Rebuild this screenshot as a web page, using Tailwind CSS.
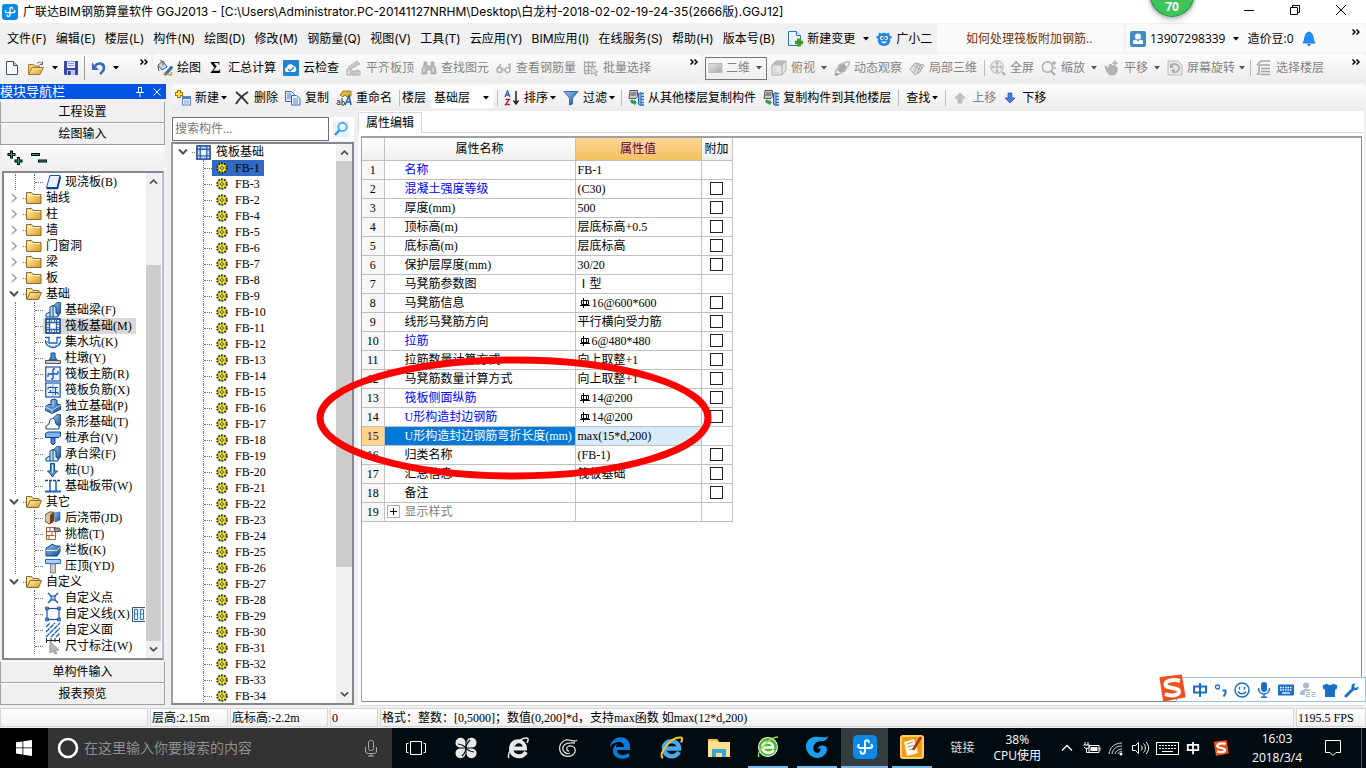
<!DOCTYPE html>
<html lang="zh-CN">
<head>
<meta charset="utf-8">
<title>广联达BIM钢筋算量软件 GGJ2013</title>
<script src="https://cdn.jsdelivr.net/npm/@tailwindcss/browser@4"></script>
</head>
<body class="h-screen overflow-hidden flex flex-col bg-[#f0f0f0] text-black text-[12px] leading-4 font-['Open_Sans','Noto_Sans_CJK_SC',sans-serif]">

<svg class="absolute size-0" aria-hidden="true">
  <defs>
    <linearGradient id="gFold" x1="0" y1="0" x2="1" y2="1"><stop offset="0" stop-color="#fff3b8"/><stop offset="1" stop-color="#d99a22"/></linearGradient>
    <linearGradient id="gBlue" x1="0" y1="0" x2="1" y2="1"><stop offset="0" stop-color="#9cc8f0"/><stop offset="1" stop-color="#0f4f96"/></linearGradient>
    <linearGradient id="gGrey" x1="0" y1="0" x2="1" y2="1"><stop offset="0" stop-color="#e6e6e6"/><stop offset="1" stop-color="#a8a8a8"/></linearGradient>
  </defs>
  <symbol id="app" viewBox="0 0 16 16"><rect width="16" height="16" rx="3" fill="#0a8ae6"/><path d="M8 11V4.800c0-1.800 2.600-1.800 2.600 0M3.800 6.500C2.800 8 3.600 8.600 5 8.600h6.500c1.400 0 1.700-1.600.8-2.100M8 10.500c0 2.600-3 2.600-3 .4" fill="none" stroke="#fff" stroke-width="1.300" stroke-linecap="round"/></symbol>
  <symbol id="arr" viewBox="0 0 6 4"><path d="M0 0h6L3 3.500z" fill="currentColor"/></symbol>
  <symbol id="more" viewBox="0 0 8 6"><path d="M.5.500 3 3 .5 5.500M4.500.500 7 3 4.500 5.500" fill="none" stroke="#000" stroke-width="1.500"/></symbol>
  <symbol id="doc" viewBox="0 0 16 16"><path d="M2.500 1.500h7l4 4v9h-11z" fill="#fff" stroke="#36517c"/><path d="M9.500 1.500v4h4" fill="#bcd2ee" stroke="#36517c"/></symbol>
  <symbol id="openf" viewBox="0 0 16 16"><path d="M.5 14V4.500h5l1 1.500h5v2" fill="#f3cf73" stroke="#a57a2a"/><path d="M.5 14.500 4 7.500h11.500L12 14.500z" fill="url(#gFold)" stroke="#a57a2a"/><path d="M9 3.500c2-2 4-1.500 5 .5M14.500 1.500v3h-3" fill="none" stroke="#4a6a8a"/></symbol>
  <symbol id="save" viewBox="0 0 16 16"><path d="M1 1h14v14H2l-1-1z" fill="#3a46a8"/><rect x="4" y="1.500" width="8" height="6.500" fill="#e6ecfa"/><path d="M5 3.500h6M5 5.500h6" stroke="#8a9ac8"/><rect x="4" y="10" width="8" height="5" fill="#b8c4e8"/><rect x="5" y="11" width="2.500" height="4" fill="#2a3480"/></symbol>
  <symbol id="undo" viewBox="0 0 16 16"><path d="M4 6c3-4 9-3 9 2 0 3-2 4-4 6" fill="none" stroke="#3a66c4" stroke-width="2.600"/><path d="M1 2.500V10h7z" fill="#3a66c4"/></symbol>
  <symbol id="paint" viewBox="0 0 16 16"><path d="M1 5 6 1l4 6-5 3z" fill="#c9d4e0" stroke="#4d6076"/><path d="M3 1c2-1 3 0 3 4M1 6l1 5" fill="none" stroke="#3b5068"/><path d="m7 14 7-8 2 1.500-7 8z" fill="#2f7ac4" stroke="#204a80" stroke-width=".6"/><path d="m5 15 2-3 2 1.500z" fill="#f0b82a"/><path d="m10 14 4 1 1-3" fill="none" stroke="#e0a020" stroke-width="1.500"/></symbol>
  <symbol id="cloud" viewBox="0 0 16 16"><rect width="16" height="16" rx="1" fill="#1b86cf"/><path d="M4 12c-3-.5-3-4 0-4.500C4 4 9 3 10.500 6c3 0 4 5 1 6z" fill="#fff"/><path d="m5 9 2 2 4-4" fill="none" stroke="#1b86cf" stroke-width="1.500"/></symbol>
  <symbol id="align" viewBox="0 0 16 16"><path d="m2 7 9-6 3 3-9 5z" fill="url(#gGrey)" stroke="#aaa" stroke-width=".7"/><path d="M1 15V9h4v6zM6 15v-4h8v4zM8 11v4M11 9v6" fill="#ddd" stroke="#aaa"/></symbol>
  <symbol id="bino" viewBox="0 0 16 16"><path d="M3 2h3v3l1 1h2l1-1V2h3v3l2 4v5h-5v-4H6v4H1V9l2-4z" fill="#b8b8b8" stroke="#999" stroke-width=".6"/><path d="M3 8v4M12 8v4" stroke="#eee"/></symbol>
  <symbol id="glass" viewBox="0 0 16 16"><path d="M1 10a2.500 2.500 0 1 0 5 0 2.500 2.500 0 1 0-5 0zm8 0a2.500 2.500 0 1 0 5 0 2.500 2.500 0 1 0-5 0zM6 9.500h3M1 9l4-5M14 9V4l-2 1" fill="none" stroke="#b0b0b0" stroke-width="1.500"/></symbol>
  <symbol id="gridsel" viewBox="0 0 16 16"><path d="M1.500 1v13M5.500 1v13M9.500 1v6M1 2.500h12M1 6.500h12M1 10.500h6M1 13.500h6" fill="none" stroke="#aaa" stroke-width="1.300"/><path d="m8 6 7 6-3 .3 2 3-1.500.5-1.500-3-2.500 2z" fill="#ddd" stroke="#999" stroke-width=".7"/></symbol>
  <symbol id="flat" viewBox="0 0 16 16"><rect x="1" y="3.500" width="13" height="9" fill="url(#gGrey)" stroke="#bbb"/></symbol>
  <symbol id="cube" viewBox="0 0 16 16"><path d="M1 5 5 1h10v9l-4 5H1z" fill="#e6e6e6" stroke="#aaa"/><path d="M1 5h10v10M11 5l4-4" fill="none" stroke="#aaa"/><path d="M1 5 5 1h10l-4 4z" fill="#bbb"/><path d="M4 8v5h5" fill="none" stroke="#ccc"/></symbol>
  <symbol id="orbit" viewBox="0 0 16 16"><circle cx="8" cy="8" r="4.500" fill="#aaa"/><path d="M2 14c-3-3 9-14 13-12 2 2-8 14-13 12z" fill="none" stroke="#b8b8b8" stroke-width="1.500"/><path d="m1 15 3-1" stroke="#999" stroke-width="2"/></symbol>
  <symbol id="part3" viewBox="0 0 16 16"><path d="m1 9 5-6 9 2-4 7-5 3z" fill="#e0e0e0" stroke="#a8a8a8"/><path d="m4 5 8 5M9 3.500 5 13M7 3l7 5M12 4 8 14" fill="none" stroke="#a8a8a8"/></symbol>
  <symbol id="full" viewBox="0 0 16 16"><circle cx="7" cy="7" r="6.200" fill="#eee" stroke="#aaa"/><path d="M7 2v10M2 7h10M5.500 4 7 2.200 8.500 4M5.500 10 7 11.800 8.500 10M4 5.500 2.200 7 4 8.500M10 5.500 11.800 7 10 8.500" fill="none" stroke="#aaa"/><path d="m12 12 3 3" stroke="#aaa" stroke-width="2"/></symbol>
  <symbol id="zoomi" viewBox="0 0 16 16"><circle cx="6.500" cy="7" r="5.200" fill="#f2f2f2" stroke="#aaa" stroke-width="1.400"/><path d="m10 11 4 4" stroke="#aaa" stroke-width="2.200"/><path d="M13 1v4M11 3h4M12 8h3" stroke="#999"/></symbol>
  <symbol id="hand" viewBox="0 0 16 16"><path d="M1 6c2 0 3 2 4 3V5l2-1 1 2 2-.5 1 1 2 .5v4c0 2-2 4-4 4H6c-3-2-4-5-5-9z" fill="#b4b4b4" stroke="#999" stroke-width=".6"/><path d="M11 0v6M8 3h6" stroke="#999"/></symbol>
  <symbol id="rot" viewBox="0 0 16 16"><path d="M1 1h10l4 4v10H1z" fill="#e9e9e9" stroke="#bbb"/><path d="M4 6c3-4 9-1 8 3-1 3-4 4-6 3" fill="none" stroke="#aaa" stroke-width="1.800"/><path d="M3 3v5h4zM4 10l4-1-1 5z" fill="#aaa"/></symbol>
  <symbol id="floors" viewBox="0 0 16 16"><path d="M1 5 5 1h9M3 5h11M5 8.500h9M5 11.500h9M5 14.500h9M3 5v9M1 14h3" fill="none" stroke="#a5a5a5" stroke-width="1.500"/></symbol>
  <symbol id="newc" viewBox="0 0 16 16"><path d="M4 0v8M0 4h8" stroke="#a07808" stroke-width="4"/><path d="M4 1v6M1 4h6" stroke="#ffe04a" stroke-width="2"/><rect x="7.500" y="6.500" width="8" height="8.500" fill="#eef4fd" stroke="#5a84c4"/><path d="M7 8h9" stroke="#4a7cd0" stroke-width="2"/><path d="M9 11h5M9 13h5" stroke="#7a9cd0"/></symbol>
  <symbol id="delx" viewBox="0 0 16 16"><path d="M2 2c4 3 8 7 12 12M14 2C9 5 5 9 2 14" fill="none" stroke="#333" stroke-width="1.900"/></symbol>
  <symbol id="copy" viewBox="0 0 16 16"><path d="M.5 1.500h6l3 3v7h-9z" fill="#dbe8fa" stroke="#3c6ab4"/><path d="M6.500 5.500h5l3.500 3v6.500H6.500z" fill="#eaf2ff" stroke="#3c6ab4"/><path d="M2 4h4M2 6h4M2 8h4M8 9h5M8 11h5M8 13h5" stroke="#5a88d0"/></symbol>
  <symbol id="ren" viewBox="0 0 16 16"><path d="m4 5 3-4h8v5l-4 1-2-2-2 2z" fill="#e2b83c" stroke="#8a6a1a" stroke-width=".8"/><path d="M1 11c3-2 3 0 3 4M4 12c-5 0-3 4 0 2M6 8v7c4 1 3-5 0-3" fill="none" stroke="#333"/><path d="m9 15 4-9 2 9M10 12h5" fill="none" stroke="#2a5cc0" stroke-width="1.500"/></symbol>
  <symbol id="sort" viewBox="0 0 16 16"><path d="m1 7 2.500-6L6 7M2 5h3" fill="none" stroke="#3a56b0" stroke-width="1.300"/><path d="M1.500 9.500h4l-4 5h4.500" fill="none" stroke="#a03040" stroke-width="1.300"/><path d="M12 1v12M9.500 10.500 12 14l2.500-3.500" fill="none" stroke="#222" stroke-width="1.500"/></symbol>
  <symbol id="filt" viewBox="0 0 16 16"><path d="M1 1.500h14L9.500 8v6l-3 1V8z" fill="url(#gBlue)" stroke="#3468b8"/></symbol>
  <symbol id="fromf" viewBox="0 0 16 16"><path d="M2 .5h7.500v6l-1.500 2H1z" fill="#ccc" stroke="#555"/><path d="M3 3h5.500M2.500 5H8" stroke="#444"/><path d="M10.500 3.500 13 2.500v13l-2.500-1z" fill="#8cb8e8" stroke="#2c6cb4"/><path d="M13 3.500h3M13 6.500h3M13 9.500h3M13 12.500h3M13 15h3" stroke="#2c6cb4" stroke-width="1.400"/><path d="M2 11c2-2 3-1 4 0V9.500l3 3-3 3V14c-2 0-3-1-4-3z" fill="#28a050"/></symbol>
  <symbol id="up" viewBox="0 0 12 12"><path d="M6 1 1 6h3v5h4V6h3z" fill="#c4c4c4" stroke="#aaa" stroke-width=".7"/></symbol>
  <symbol id="down" viewBox="0 0 12 12"><path d="M6 11 1 6h3V1h4v5h3z" fill="#4a7ae0" stroke="#2a4ca8" stroke-width=".7"/></symbol>
  <symbol id="chg" viewBox="0 0 16 16"><path d="M1.500.500h8l4 4v10h-12z" fill="#eaf4ff" stroke="#2f74b4"/><path d="M9.500.500v4h4" fill="#fff" stroke="#2f74b4"/><path d="M12 7.500v8M8 11.500h8" stroke="#3a9a20" stroke-width="3.600"/></symbol>
  <symbol id="mascot" viewBox="0 0 16 16"><path d="m3 1.500 2 1c2-1 4-1 6 0l2-1 .5 3c1 1 2 1 2.500.5 0 2-1 2.500-2 3 1 4-2 7-6 7s-7-3-6-7c-1-.5-2-1-2-3 .5.500 1.500.500 2.500-.5z" fill="#1f8ae0"/><ellipse cx="5.800" cy="7" rx="1.800" ry="2" fill="#fff"/><ellipse cx="10.200" cy="7" rx="1.800" ry="2" fill="#fff"/><circle cx="6.200" cy="7.200" r=".9" fill="#124a84"/><circle cx="9.800" cy="7.200" r=".9" fill="#124a84"/><path d="M5 10.500c1.500 2.500 4.500 2.500 6 0z" fill="#fff"/></symbol>
  <symbol id="user" viewBox="0 0 16 16"><rect width="16" height="16" rx="2" fill="#3d8ec4"/><circle cx="8" cy="5.500" r="3" fill="#fff"/><path d="M3 13V9.500l3-1 2 2 2-2 3 1V13z" fill="#fff"/></symbol>
  <symbol id="bell" viewBox="0 0 14 16"><path d="M7 1c5 1 3.500 8 6 11H1C3.500 9 2 2 7 1z" fill="#1e90ff" stroke="#1874dc"/><path d="M5 13h4l-2 2.500z" fill="#1667c4"/></symbol>
  <symbol id="fold" viewBox="0 0 16 14"><path d="M.5 12.500v-11h5l1.500 2h8v9z" fill="url(#gFold)" stroke="#8d6a26"/><path d="M1 4.500h13" stroke="#fff4cc"/></symbol>
  <symbol id="foldo" viewBox="0 0 16 14"><path d="M.5 12V1.500h5l1.500 2h6V6" fill="#f7e29a" stroke="#8d6a26"/><path d="m1 12.500 3-7h11.500l-3 7z" fill="url(#gFold)" stroke="#8d6a26"/></symbol>
  <symbol id="slab" viewBox="0 0 16 16"><path d="M5 1.500h10l-3 12H1.500z" fill="#e8f2ff" stroke="#1c50a8"/><path d="M1.500 14.500h11l3-12" fill="none" stroke="#0f3f8a" stroke-width="1.600"/></symbol>
  <symbol id="beam" viewBox="0 0 16 16"><path d="m8 4 4-3.500h3.500V11L13 14z" fill="url(#gBlue)" stroke="#12427c" stroke-width=".8"/><path d="M1 15v-3l4-2V5l3-1.500 3 1.500v6l2 1v3z" fill="#cfe4f8" stroke="#0f4688"/><path d="M5 10v5M8 4v11" stroke="#0f4688"/></symbol>
  <symbol id="raft" viewBox="0 0 16 16"><rect x="1" y="1" width="14" height="14" fill="#fff" stroke="#123f8a" stroke-width="1.600"/><path d="M4.500 1v14M11.500 1v14M1 4.500h14M1 11.500h14" stroke="#2a5cac" stroke-width="1.400"/><path d="M6.500 2v2M9.500 2v2M6.500 12v2M9.500 12v2M2 6.500h2M2 9.500h2M12 6.500h2M12 9.500h2" stroke="#5a86cc"/></symbol>
  <symbol id="pit" viewBox="0 0 16 16"><path d="M0 3.500h4V9h8V3.500h4M0 6c1 10 15 10 16 0" fill="none" stroke="#1c60b4" stroke-width="1.300"/><path d="M2 7v2m3 2v2m3-1v2m3-3v2m3-4v2" stroke="#1c60b4"/></symbol>
  <symbol id="pier" viewBox="0 0 16 16"><path d="m4 10 2-3V3h4v4l2 3z" fill="#4d8bd4" stroke="#16458a"/><path d="M.5 10.500h15v3H.5z" fill="#ccc" stroke="#555"/></symbol>
  <symbol id="main" viewBox="0 0 16 16"><rect x=".7" y="1" width="14.500" height="14" fill="#e9f2ff" stroke="#1c54b4" stroke-width="1.200"/><path d="M8 3v10M3 8h10M10 3H8M3 11V8M13 8V5M6 13h2" fill="none" stroke="#1c54b4" stroke-width="1.300"/></symbol>
  <symbol id="neg" viewBox="0 0 16 16"><rect x=".7" y="1" width="14.500" height="14" fill="#e9f2ff" stroke="#1c54b4" stroke-width="1.200"/><path d="M8 1v14" stroke="#7d9ccc"/><path d="M3 5.500h10M3 10.500h10M5.500 5.500v-1M10.500 5.500V13M5.500 10.500V8M3 5.500v2M13 10.500v2" fill="none" stroke="#1c54b4" stroke-width="1.200"/></symbol>
  <symbol id="indep" viewBox="0 0 16 16"><path d="m0 9 4-3 2 1V2l4-1 2 1.500V6l4 1v4L7 15.500 0 12z" fill="url(#gBlue)" stroke="#0e3d78"/><path d="m0 9 7 3 9-5M7 12v3M8 3v6" fill="none" stroke="#e6f2ff" stroke-width=".8"/></symbol>
  <symbol id="strip" viewBox="0 0 16 16"><path d="m8 4 4-3.500h3.500V11L13 14z" fill="url(#gBlue)" stroke="#12427c" stroke-width=".8"/><path d="M1 15v-3l3-2 1-4c2-2 4-2 5 0l1 4 3 2v3z" fill="#fff" stroke="#0f4688"/></symbol>
  <symbol id="cap" viewBox="0 0 16 16"><path d="M.5 3.500 3 2h12.500v4L14 7.500H.5z" fill="#7cb4ec" stroke="#16458a"/><path d="M6 8v5l2 2 2-2V8z" fill="#4d8bd4" stroke="#16458a"/></symbol>
  <symbol id="pile" viewBox="0 0 16 16"><path d="M5.500 1.500h4V9h3l-3 3-2 3-2-3-3-3h3z" fill="#5a94d8" stroke="#16458a"/><path d="M7.500 3v8" stroke="#cfe4ff"/></symbol>
  <symbol id="band" viewBox="0 0 16 16"><path d="M0 2.500h16" stroke="#16458a" stroke-width="1.500" stroke-dasharray="3 1"/><path d="M5 3v10M11 3v10" stroke="#1c60c4" stroke-width="1.500"/><path d="M0 13.500h16" stroke="#1c60c4" stroke-width="2"/></symbol>
  <symbol id="post" viewBox="0 0 16 16"><path d="m0 5 4-3h4v10l-4 2-4-3z" fill="#d8c0a0" stroke="#555"/><path d="m5 5 4-3v9l-4 3z" fill="#7a3c14"/><path d="m9 3 6-1v8l-5 2z" fill="url(#gBlue)" stroke="#26588c" stroke-width=".6"/></symbol>
  <symbol id="eave" viewBox="0 0 16 16"><path d="M1.500 1.500h9v12h-9z" fill="#fff" stroke="#b45a30"/><path d="M1.500 5.500h8M1.500 9.500h8M5 2v3M7 6v3M4 10v3" stroke="#b45a30"/><path d="M9 2h5l2 3-6 1z" fill="#999" stroke="#444"/></symbol>
  <symbol id="rail" viewBox="0 0 16 16"><path d="m1 6 4-2 2-2 4 2h4v6l-3 4H1z" fill="url(#gBlue)" stroke="#16458a"/><path d="M1 8.500h11l3-3.500" fill="none" stroke="#e0f0ff"/></symbol>
  <symbol id="coping" viewBox="0 0 16 16"><path d="M.5 1.500h15v4H.5z" fill="#a8d0ff" stroke="#1c6cd4"/><path d="M5.500 6h5v9h-5z" fill="#ccc" stroke="#888"/></symbol>
  <symbol id="cpt" viewBox="0 0 16 16"><path d="m3 3 10 10M13 3 3 13" stroke="#1c50b0" stroke-width="1.400"/><rect x="6" y="6" width="4" height="4" fill="#9cc8ff" stroke="#1c50b0"/></symbol>
  <symbol id="cline" viewBox="0 0 16 16"><rect x="2" y="2.500" width="12" height="11" fill="#fff" stroke="#1c50b0" stroke-width="1.200"/><path d="M.5 1h3v3h-3zm12 0h3v3h-3zm0 11h3v3h-3zm-12 0h3v3h-3z" fill="#4a86e0" stroke="#123f8a" stroke-width=".6"/></symbol>
  <symbol id="cface" viewBox="0 0 16 16"><path d="M1 5l4-4M1 10l9-9M1 15 15 1M6 15l9-9M11 15l4-4" stroke="#1c60c4" stroke-width="1.300" stroke-dasharray="5 .6"/></symbol>
  <symbol id="dim" viewBox="0 0 16 16"><path d="M1.500 0v5M14.500 0v5M1 2.500h14M6 0v4M10 0v4" stroke="#222"/><path d="m5 4 9 8-4 .5 2 3-2 .5-2-3-3 2z" fill="#bbb" stroke="#777" stroke-width=".7"/></symbol>
  <symbol id="gear" viewBox="0 0 12 12"><circle cx="6" cy="6" r="4.800" fill="#f8f020" stroke="#2a2800" stroke-width="1.800" stroke-dasharray="1.900 1.100"/><path d="M6 2v8M2 6h8" stroke="#807a00" stroke-width=".8"/><circle cx="6" cy="6" r="1.400" fill="#fff" stroke="#333" stroke-width=".8"/></symbol>
  <symbol id="cu" viewBox="0 0 10 8"><path d="M1 6.500 5 2.500 9 6.500" fill="none" stroke="#505050" stroke-width="2"/></symbol>
  <symbol id="cd" viewBox="0 0 10 8"><path d="M1 1.500 5 5.500 9 1.500" fill="none" stroke="#505050" stroke-width="2"/></symbol>
  <symbol id="cr" viewBox="0 0 8 10"><path d="M2 1 6 5 2 9" fill="none" stroke="#a0a0a0" stroke-width="1.500"/></symbol>
  <symbol id="mag" viewBox="0 0 16 16"><circle cx="9.500" cy="6" r="4.200" fill="#eaf6ff" stroke="#4aa4e8" stroke-width="1.800"/><path d="M6.500 9 2 14" stroke="#3a90d8" stroke-width="2.400"/></symbol>
  <symbol id="phi" viewBox="0 0 10 10"><path d="M3.500 0v10M6.500 2v5M1.500 2.500h7v4h-7zM0 7.500h10" fill="none" stroke="#000"/></symbol>
  <symbol id="sogou" viewBox="0 0 28 28"><path d="M2.500 4 23 1.500 26.500 22.500 6 26.500z" fill="#f0501e" stroke="#f0501e" stroke-width="2" stroke-linejoin="round"/><path d="M22 7C15 5 7.500 6.500 7.500 10.500c0 4.500 13.500 2.500 13.500 7 0 4-8 5-14 2.500" fill="none" stroke="#fff" stroke-width="4"/></symbol>
  <symbol id="zh" viewBox="0 0 16 16"><path d="M2 4.500h12v6H2zM8 1v14" fill="none" stroke="currentColor" stroke-width="2"/></symbol>
</svg>

<!-- title bar -->
<header class="relative h-[23px] shrink-0 bg-white flex items-center pl-[2px]">
  <svg class="size-4"><use href="#app"/></svg>
  <h1 class="ml-[5px] flex-1 whitespace-nowrap font-['Inter','Noto_Sans_CJK_SC',sans-serif]">广联达BIM钢筋算量软件 GGJ2013 - [C:\Users\Administrator.PC-20141127NRHM\Desktop\白龙村-2018-02-02-19-24-35(2666版).GGJ12]</h1>
  <div class="flex items-center gap-[34px] pr-[19px] pb-[3px]">
    <button aria-label="最小化"><svg class="size-3" viewBox="0 0 12 12"><path d="M1 6.500h10" stroke="#000"/></svg></button>
    <button aria-label="还原"><svg class="size-3" viewBox="0 0 12 12"><path d="M1.500 3.500h7v7h-7zM3.500 3V1.500h7v7H9" fill="none" stroke="#000"/></svg></button>
    <button aria-label="关闭"><svg class="size-3" viewBox="0 0 12 12"><path d="m1 1 10 10M11 1 1 11" stroke="#000"/></svg></button>
  </div>
  <div class="absolute right-[170px] top-[-29px] size-12 rounded-full border-2 border-[#c9c9c9] bg-[#3cc35a] ring-1 ring-inset ring-[#1f8f3c] shadow-md text-white font-bold leading-3 flex items-end justify-center pb-1">70</div>
</header>

<!-- menu bar -->
<nav class="h-[31px] shrink-0 flex items-center whitespace-nowrap" aria-label="菜单">
  <div class="flex items-center gap-[9px] pl-[7px] font-['Inter','Noto_Sans_CJK_SC',sans-serif]">
    <button>文件(F)</button><button>编辑(E)</button><button>楼层(L)</button><button>构件(N)</button><button>绘图(D)</button><button>修改(M)</button><button>钢筋量(Q)</button><button>视图(V)</button><button>工具(T)</button><button>云应用(Y)</button><button>BIM应用(I)</button><button>在线服务(S)</button><button>帮助(H)</button><button>版本号(B)</button>
  </div>
  <button class="ml-3 flex items-center gap-1"><svg class="size-4"><use href="#chg"/></svg>新建变更<svg class="ml-1 w-[6px] h-1"><use href="#arr"/></svg></button>
  <button class="ml-[7px] flex items-center gap-1"><svg class="size-4"><use href="#mascot"/></svg>广小二</button>
  <div class="ml-auto w-[187px] h-[29px] rounded bg-[#fafafa] flex items-center pl-[29px] text-[#6b3410]"><a href="#">如何处理筏板附加钢筋..</a></div>
  <div class="ml-[2px] w-[240px] h-[29px] rounded bg-[#fafafa] flex items-center pl-1">
    <button class="flex items-center gap-1"><svg class="size-4"><use href="#user"/></svg>13907298339<svg class="ml-1 w-[6px] h-1"><use href="#arr"/></svg></button>
    <span class="ml-2">造价豆:0</span>
    <button class="ml-2" aria-label="通知"><svg class="w-[14px] h-4"><use href="#bell"/></svg></button>
    <button class="ml-auto mr-[6px] self-start mt-[5px]" aria-label="更多"><svg class="w-2 h-[6px]"><use href="#more"/></svg></button>
  </div>
</nav>

<!-- drawing toolbar -->
<div class="h-7 shrink-0 flex whitespace-nowrap text-[#838383]">
  <div class="w-[151px] mr-[2px] rounded bg-linear-to-b from-[#fcfcfc] to-[#ececec] flex items-center pl-[4px] text-black">
    <button aria-label="新建"><svg class="size-4"><use href="#doc"/></svg></button>
    <button class="ml-2 flex items-center gap-2" aria-label="打开"><svg class="size-4"><use href="#openf"/></svg><svg class="w-[6px] h-1"><use href="#arr"/></svg></button>
    <button class="ml-[5px]" aria-label="保存"><svg class="size-4"><use href="#save"/></svg></button>
    <i class="ml-[5px] w-px h-6 bg-[#999]"></i>
    <button class="ml-[6px] flex items-center gap-[6px]" aria-label="撤销"><svg class="size-4"><use href="#undo"/></svg><svg class="w-[6px] h-1"><use href="#arr"/></svg></button>
    <button class="ml-auto mr-[3px] self-start mt-[5px]" aria-label="更多"><svg class="w-2 h-[6px]"><use href="#more"/></svg></button>
  </div>
  <div class="w-[548px] mr-[2px] rounded bg-linear-to-b from-[#fcfcfc] to-[#ececec] flex items-center gap-[7px] pl-[4px]">
    <button class="flex items-center gap-1 text-black"><svg class="size-4"><use href="#paint"/></svg>绘图</button>
    <button class="flex items-center gap-[5px] text-black"><b class="w-[15px] text-center font-['Liberation_Serif',serif] text-[16px]">Σ</b>汇总计算</button>
    <button class="flex items-center gap-1 text-black"><svg class="size-4"><use href="#cloud"/></svg>云检查</button>
    <button class="flex items-center gap-1" disabled><svg class="size-4"><use href="#align"/></svg>平齐板顶</button>
    <button class="flex items-center gap-1" disabled><svg class="size-4"><use href="#bino"/></svg>查找图元</button>
    <button class="flex items-center gap-1" disabled><svg class="size-4"><use href="#glass"/></svg>查看钢筋量</button>
    <button class="flex items-center gap-1" disabled><svg class="size-4"><use href="#gridsel"/></svg>批量选择</button>
    <button class="ml-auto mr-[3px] self-start mt-[5px]" aria-label="更多"><svg class="w-2 h-[6px]"><use href="#more"/></svg></button>
  </div>
  <div class="flex-1 rounded bg-linear-to-b from-[#fcfcfc] to-[#ececec] flex items-center pl-[2px]">
    <div class="relative flex items-center w-[62px] h-[23px] border border-[#777]">
      <svg class="ml-[2px] size-4"><use href="#flat"/></svg>
      <select class="ml-[2px] flex-1 min-w-0 appearance-none" aria-label="视图模式" disabled><option>二维</option></select>
      <svg class="absolute right-1 w-[6px] h-1 text-[#555]"><use href="#arr"/></svg>
    </div>
    <button class="ml-[4px] flex items-center gap-1" disabled><svg class="size-4"><use href="#cube"/></svg>俯视<svg class="ml-[2px] w-[6px] h-1 text-[#555]"><use href="#arr"/></svg></button>
    <button class="ml-[7px] flex items-center gap-1" disabled><svg class="size-4"><use href="#orbit"/></svg>动态观察</button>
    <button class="ml-[7px] flex items-center gap-1" disabled><svg class="size-4"><use href="#part3"/></svg>局部三维</button>
    <i class="ml-[7px] w-px h-4 bg-[#bbb]"></i>
    <button class="ml-[5px] flex items-center gap-1" disabled><svg class="size-4"><use href="#full"/></svg>全屏</button>
    <button class="ml-[7px] flex items-center gap-1" disabled><svg class="size-4"><use href="#zoomi"/></svg>缩放<svg class="ml-[2px] w-[6px] h-1 text-[#555]"><use href="#arr"/></svg></button>
    <button class="ml-[7px] flex items-center gap-1" disabled><svg class="size-4"><use href="#hand"/></svg>平移<svg class="ml-[2px] w-[6px] h-1 text-[#555]"><use href="#arr"/></svg></button>
    <button class="ml-[7px] flex items-center gap-1" disabled><svg class="size-4"><use href="#rot"/></svg>屏幕旋转<svg class="w-[6px] h-1 text-[#555]"><use href="#arr"/></svg></button>
    <i class="ml-[5px] w-px h-4 bg-[#bbb]"></i>
    <button class="ml-[5px] flex items-center gap-1" disabled><svg class="size-4"><use href="#floors"/></svg>选择楼层</button>
    <button class="ml-auto mr-[6px] self-start mt-[5px]" aria-label="更多"><svg class="w-2 h-[6px]"><use href="#more"/></svg></button>
  </div>
</div>

<div class="flex-1 min-h-0 flex pt-[2px]">
  <!-- module navigator -->
  <aside class="w-[166px] shrink-0 flex flex-col pb-px font-['Liberation_Serif','Noto_Sans_CJK_SC',serif]">
    <div class="h-[15px] bg-[#0054e3] text-white flex items-center overflow-hidden">
      <h2 class="flex-1 text-[13px] leading-[15px]">模块导航栏</h2>
      <button class="mr-[9px]" aria-label="固定"><svg class="w-2 h-[10px]" viewBox="0 0 8 10"><path d="M2.500 0v5M5.500 0v5M2 .5h4M0 5.500h8M4 6v4" fill="none" stroke="#fff"/></svg></button>
      <button class="mr-[5px]" aria-label="关闭"><svg class="size-2" viewBox="0 0 8 8"><path d="m.5.500 7 7M7.500.500l-7 7" stroke="#fff"/></svg></button>
    </div>
    <button class="mt-[2px] mr-px h-[22px] border border-[#a0a0a0] border-t-white">工程设置</button>
    <button class="mr-px h-[22px] border border-[#a0a0a0] border-t-white">绘图输入</button>
    <div class="mx-[2px] h-[26px] bg-linear-to-b from-[#fcfcfc] to-[#eee] flex items-center gap-2 pl-[5px]">
      <button aria-label="全部展开"><svg class="size-4" viewBox="0 0 16 16"><path d="M4.500.500v8M.5 4.500h8M11.500 7v8M7.500 11h8" stroke="#000" stroke-width="3"/><path d="M4.500 1.500v6M1.500 4.500h6M11.500 8v6M8.500 11h6" stroke="#10a090" stroke-width="1.200"/></svg></button>
      <button aria-label="全部折叠"><svg class="size-4" viewBox="0 0 16 16"><path d="M0 4.500h9M7 11h9" stroke="#000" stroke-width="3"/><path d="M1 4.500h7M8 11h7" stroke="#10a090" stroke-width="1.200"/></svg></button>
    </div>
    <div class="ml-[2px] mr-[2px] flex-1 min-h-0 border-2 border-[#828790] border-r-[#b8bcc4] border-b-[#828790] bg-white flex overflow-hidden">
      <ul id="modules" class="flex-1 min-w-0 overflow-hidden pt-px"></ul>
      <div class="w-[15px] mr-[1px] bg-[#f0f0f0] flex flex-col items-center">
        <svg class="my-[5px] w-[9px] h-[7px] shrink-0"><use href="#cu"/></svg>
        <div class="mt-[75px] w-full flex-1 bg-[#cdcdcd]"></div>
        <svg class="my-[5px] w-[9px] h-[7px] shrink-0"><use href="#cd"/></svg>
      </div>
    </div>
    <button class="mt-px mr-px h-[22px] border border-[#a0a0a0] border-t-white">单构件输入</button>
    <button class="mr-px h-[22px] border border-[#a0a0a0] border-t-white">报表预览</button>
  </aside>

  <div class="ml-[5px] flex-1 min-w-0 flex flex-col">
    <!-- component toolbar -->
    <div class="h-[27px] shrink-0 rounded bg-linear-to-b from-[#fcfcfc] to-[#ececec] flex items-center pl-1 whitespace-nowrap">
      <button class="flex items-center gap-1"><svg class="size-4"><use href="#newc"/></svg>新建<svg class="-ml-[2px] w-[6px] h-1"><use href="#arr"/></svg></button>
      <button class="ml-[7px] flex items-center gap-1"><svg class="size-4"><use href="#delx"/></svg>删除</button>
      <button class="ml-[7px] flex items-center gap-1"><svg class="size-4"><use href="#copy"/></svg>复制</button>
      <button class="ml-[7px] flex items-center gap-1"><svg class="size-4"><use href="#ren"/></svg>重命名</button>
      <i class="ml-[7px] w-px h-4 bg-[#bbb]"></i>
      <label for="floor" class="ml-[2px]">楼层</label>
      <div class="relative ml-[5px] w-[62px] h-[21px] bg-white flex items-center">
        <select id="floor" class="w-full pl-[3px] appearance-none"><option>基础层</option></select>
        <svg class="absolute right-[4px] w-[6px] h-1"><use href="#arr"/></svg>
      </div>
      <i class="ml-1 w-px h-4 bg-[#bbb]"></i>
      <button class="ml-[6px] flex items-center gap-1"><svg class="size-4"><use href="#sort"/></svg>排序<svg class="-ml-[2px] w-[6px] h-1"><use href="#arr"/></svg></button>
      <button class="ml-[7px] flex items-center gap-1"><svg class="size-4"><use href="#filt"/></svg>过滤<svg class="-ml-[2px] w-[6px] h-1"><use href="#arr"/></svg></button>
      <i class="ml-[6px] w-px h-4 bg-[#bbb]"></i>
      <button class="ml-[6px] flex items-center gap-1"><svg class="size-4"><use href="#fromf"/></svg>从其他楼层复制构件</button>
      <button class="ml-[7px] flex items-center gap-1"><svg class="size-4"><use href="#fromf"/></svg>复制构件到其他楼层</button>
      <i class="ml-[7px] w-px h-4 bg-[#bbb]"></i>
      <button class="ml-[7px] flex items-center gap-1">查找<svg class="-ml-[2px] w-[6px] h-1"><use href="#arr"/></svg></button>
      <i class="ml-[7px] w-px h-4 bg-[#bbb]"></i>
      <button class="ml-2 flex items-center gap-[6px] text-[#838383]" disabled><svg class="size-3"><use href="#up"/></svg>上移</button>
      <button class="ml-2 flex items-center gap-[6px]"><svg class="size-3"><use href="#down"/></svg>下移</button>
    </div>

    <div class="flex-1 min-h-0 flex">
      <!-- component list -->
      <section class="w-[183px] shrink-0 flex flex-col pt-[6px] pb-px" aria-label="构件列表">
        <form class="flex items-center h-6 bg-white">
          <input type="search" aria-label="搜索构件" placeholder="搜索构件..." class="ml-px w-[157px] h-6 border border-[#6f6f6f] bg-white pl-[2px] pb-[2px] text-[12px] placeholder:text-[#777]">
          <button class="ml-[4px] size-4 bg-[#e4f3fd]" type="button" aria-label="搜索"><svg class="size-4"><use href="#mag"/></svg></button>
        </form>
        <div class="mt-px flex-1 min-h-0 bg-white border-2 border-[#828790] border-l-[#9a9ea6] flex overflow-hidden font-['Liberation_Serif','Noto_Sans_CJK_SC',serif]">
          <div class="flex-1 min-w-0 overflow-hidden">
            <div class="h-4 flex items-center pl-[5px]"><svg class="w-[10px] h-2"><use href="#cd"/></svg><i class="ml-[4px] w-[3px] border-t border-dotted border-[#777]"></i><svg class="ml-px size-[15px]"><use href="#raft"/></svg><span class="ml-[5px]">筏板基础</span></div>
            <ul id="components"></ul>
          </div>
          <div class="w-[16px] bg-[#f0f0f0] flex flex-col items-center">
            <svg class="my-[5px] w-[9px] h-[7px] shrink-0"><use href="#cu"/></svg>
            <div class="w-full flex-1 bg-[#cdcdcd]"></div>
            <svg class="mt-[124px] mb-[5px] w-[9px] h-[7px] shrink-0"><use href="#cd"/></svg>
          </div>
        </div>
      </section>

      <!-- property editor -->
      <section class="flex-1 min-w-0 ml-[4px] mr-[2px] flex flex-col border-b border-[#ddd] bg-white" aria-label="属性编辑">
        <div class="flex h-[22px] pt-px">
          <button class="w-[64px] border border-b-0 border-[#d9d9d9]">属性编辑</button>
          <div class="flex-1 border-b border-[#d9d9d9]"></div>
        </div>
        <div class="flex-1 min-h-0 mt-[3px] ml-[3px] mr-[2px] mb-[3px] border border-[#a0a0a0] border-r-[#828790] border-b-[#828790] border-t-2 relative font-['Liberation_Serif','Noto_Sans_CJK_SC',serif]">
          <table class="table-fixed w-[370px] border-collapse">
            <colgroup><col class="w-[22px]"><col class="w-[191px]"><col class="w-[126px]"><col class="w-[31px]"></colgroup>
            <thead><tr class="h-[22px] bg-linear-to-b from-white to-[#efefef]">
              <th class="border-r border-b border-[#c0c0c0] p-0"></th>
              <th class="border-r border-b border-[#c0c0c0] p-0 font-normal">属性名称</th>
              <th class="border-r border-b border-[#c0c0c0] p-0 font-normal text-[#5a0050] bg-linear-to-b from-[#fcd795] to-[#f2c05e]">属性值</th>
              <th class="border-r border-b border-[#c0c0c0] p-0 font-normal">附加</th>
            </tr></thead>
            <tbody id="props"></tbody>
          </table>
          <svg class="absolute left-[-46px] top-[218px] w-[396px] h-[125px]" viewBox="0 0 396 125" aria-hidden="true"><ellipse cx="198" cy="62" rx="194" ry="58" fill="none" stroke="#f00" stroke-width="7"/></svg>
        </div>
      </section>
    </div>
  </div>
</div>

<!-- status bar -->
<div class="relative h-[22px] shrink-0 flex gap-[2px] pt-[2px] pb-px whitespace-nowrap font-['Liberation_Serif','Noto_Sans_CJK_SC',serif]">
  <div class="w-[148px] border border-[#d4d4d4] bg-linear-to-b from-white to-[#f0f0f0]"></div>
  <div class="w-[78px] border border-[#d4d4d4] bg-linear-to-b from-white to-[#f0f0f0] pl-px pt-px">层高:2.15m</div>
  <div class="w-[98px] border border-[#d4d4d4] bg-linear-to-b from-white to-[#f0f0f0] pl-px pt-px">底标高:-2.2m</div>
  <div class="w-[48px] border border-[#d4d4d4] bg-linear-to-b from-white to-[#f0f0f0] pl-px pt-px">0</div>
  <div class="flex-1 border border-[#d4d4d4] bg-linear-to-b from-white to-[#f0f0f0] pl-px pt-px">格式：整数：[0,5000]；数值(0,200]*d，支持max函数 如max(12*d,200)</div>
  <div class="w-[70px] border border-[#d4d4d4] bg-linear-to-b from-white to-[#f0f0f0] pl-px pt-px">1195.5 FPS</div>

  <!-- floating input-method bar -->
  <div class="absolute right-0 bottom-[26px] w-[190px] h-[25px] bg-white border border-[#9cc0e0] flex items-center gap-[6px] pl-[15px] text-[#1c6fc8]">
    <svg class="absolute left-[-19px] bottom-[-1px] size-7"><use href="#sogou"/></svg>
    <svg class="size-4"><use href="#zh"/></svg>
    <svg class="w-[14px] h-4" viewBox="0 0 14 16"><circle cx="3.500" cy="5" r="2" fill="none" stroke="currentColor" stroke-width="1.300"/><path d="M8.500 8.500h3v3l-2 3" fill="none" stroke="currentColor" stroke-width="2"/></svg>
    <svg class="size-4" viewBox="0 0 16 16"><circle cx="8" cy="8" r="7" fill="none" stroke="currentColor" stroke-width="1.500"/><path d="M5.500 5v2.500M10.500 5v2.500M4 9.500c2 3 6 3 8 0" fill="none" stroke="currentColor" stroke-width="1.500"/></svg>
    <svg class="size-4" viewBox="0 0 16 16"><rect x="5" y="0" width="6" height="10" rx="3" fill="currentColor"/><path d="M2.500 6c0 8 11 8 11 0M8 12v3M5 15.200h6" fill="none" stroke="currentColor" stroke-width="1.500"/></svg>
    <svg class="size-4" viewBox="0 0 16 16"><rect x="0" y="2.500" width="16" height="11" rx="1" fill="currentColor"/><path d="M2 5.500h12M2 8h12" stroke="#fff" stroke-width="1.300" stroke-dasharray="1.500 1"/><path d="M4 11h8" stroke="#fff" stroke-width="1.300"/></svg>
    <svg class="size-4 text-[#a9bdd2]" viewBox="0 0 16 16"><circle cx="6" cy="3.500" r="3" fill="currentColor"/><path d="M0 12c0-6 10-6 11-3H5v4H0z" fill="currentColor"/><path d="M6 10.500h3.500v2H6.500v2H10M11.500 10.500H15v2h-3v2h3.500" fill="none" stroke="currentColor"/></svg>
    <svg class="size-4" viewBox="0 0 16 16"><path d="M5 1.500c1 2 5 2 6 0l4.500 2-1 4H13V15H3V7.500H1.500l-1-4z" fill="currentColor"/></svg>
    <svg class="size-4 shrink-0" viewBox="0 0 16 16"><path d="m2 14 7-7" stroke="currentColor" stroke-width="3" stroke-linecap="round"/><path d="M14.500 4.500 11.500 6 10 4.500 11.500 1.500C8 1 6.500 4 8 7c2 2.500 7 1.500 6.500-2.500z" fill="currentColor"/></svg>
  </div>
</div>

<!-- taskbar -->
<footer class="h-10 shrink-0 bg-[#020c10] flex items-stretch text-white">
  <button class="w-12 bg-black flex items-center justify-center" aria-label="开始"><svg class="size-4" viewBox="0 0 16 16"><path d="M0 2.300 6.500 1.400v6.100H0zM7.300 1.300 16 0v7.500H7.300zM0 8.300h6.500v6.200L0 13.600zM7.300 8.300H16V16l-8.700-1.300z" fill="#fff"/></svg></button>
  <label class="w-[344px] bg-[#333] flex items-center pl-2">
    <svg class="size-6 shrink-0" viewBox="0 0 24 24"><circle cx="12" cy="12" r="9" fill="none" stroke="#fff" stroke-width="2.600"/></svg>
    <input type="text" aria-label="搜索" placeholder="在这里输入你要搜索的内容" class="ml-1 flex-1 min-w-0 bg-transparent text-[14px] placeholder:text-[#8f8f8f]">
    <svg class="mr-3 size-[18px]" viewBox="0 0 18 18"><rect x="6.500" y="1.500" width="5" height="10" rx="2" fill="none" stroke="#aaa"/><path d="M3.500 8v4c0 2 1 2.500 3 2.500h5c2 0 3-.5 3-2.500V8M9 14.500v3M6 17h6" fill="none" stroke="#aaa"/></svg>
  </label>
  <button class="w-[48px] flex items-center justify-center" aria-label="任务视图"><svg class="w-5 h-4" viewBox="0 0 20 16"><path d="M4.500 1.500h11v13h-11zM2.500 3.500H.5v9h2M17.500 3.500h2v9h-2" fill="none" stroke="#fff"/></svg></button>
  <div class="flex">
    <button class="w-[52px] flex items-center justify-center" aria-label="应用"><svg class="size-[22px]" viewBox="0 0 22 22"><g fill="#e8e8e8"><path d="M10.500 10.500H6C2.500 10.500.5 8.500.5 6S2.500.800 5.500.800s5 2.200 5 5.200z"/><path d="M11.500 10.500V6c0-3 2-5.200 5-5.200s5 2.200 5 5.200-2 4.500-5 4.500z"/><path d="M11.500 11.500H16c3 0 5.500 1.500 5.500 4.500s-2 5.200-5 5.200-5-2.200-5-5.200z"/><path d="M10.500 11.500V16c0 3-2 5.200-5 5.200S.5 19 .5 16s2-4.500 5-4.500z"/></g><path d="M3 7c3 .5 6 1 8 4M15 3c-2 2-4 4-4 8M19 15c-3-.5-6-1-8-4M7 19c2-2 4-4 4-8" fill="none" stroke="#020c10" stroke-width="1.200"/></svg></button>
    <button class="w-[51px] flex items-center justify-center" aria-label="浏览器"><svg class="size-6" viewBox="0 0 24 24"><path d="M20 16c-4 7-15 5-15-4S19 3 19 12.500H6" fill="none" stroke="#e8e8e8" stroke-width="4"/><path d="M3 22C0 17 13 1 21 2c2 .5 1 3 0 5" fill="none" stroke="#e8e8e8" stroke-width="1.500"/></svg></button>
    <button class="w-[49px] flex items-center justify-center" aria-label="广联达"><svg class="size-5" viewBox="0 0 20 20"><path d="M19 2C17 5 13 1 8 2 2 4 0 10 3 15c4 5 12 4 14-1 1-4-2-7-6-6-3 1-3 5 0 5M17 5c-5 0-10-1-12 4-1 4 3 8 7 6" fill="none" stroke="#ddd" stroke-width="1.300"/></svg></button>
    <button class="w-[56px] flex items-center justify-center" aria-label="Edge"><svg class="size-[22px]" viewBox="0 0 22 22"><path d="M1 10C3-3 21-3 21 10v3H8c0 6 8 6 12 3v4C13 24 3 21 4 13c0-3 2-5 4-6-1 1-1 2-1 3h8c0-7-10-6-14 0z" fill="#0b7ad8"/></svg></button>
    <button class="w-[46px] flex items-center justify-center" aria-label="Internet Explorer"><svg class="size-6" viewBox="0 0 24 24"><path d="M20 16c-4 7-15 5-15-4S20 3 20 12.500H7" fill="none" stroke="#4aa8ec" stroke-width="4.500"/><path d="M4 22C-2 19 12 0 22 1.500c2 .5 1 3 0 5" fill="none" stroke="#f2c42a" stroke-width="2"/></svg></button>
    <button class="w-[50px] flex items-center justify-center" aria-label="资源管理器"><svg class="size-6" viewBox="0 0 24 24"><path d="M1 3h9l2 3h11v15H1z" fill="#ffe08c"/><path d="M1 3h9l1.500 2H1z" fill="#f0b83c"/><path d="M5 21v-8h14v8h-4v-4H9v4z" fill="#38a4dc"/></svg></button>
    <button class="ml-1 w-[40px] flex items-center justify-center border-b-2 border-[#76b9ed]" aria-label="360浏览器"><svg class="size-6" viewBox="0 0 24 24"><circle cx="12" cy="12" r="10" fill="#fff"/><circle cx="12" cy="12" r="9" fill="#4cb82a"/><path d="M17.500 15c-3 5-11 3-11-3s10.500-6 10.500.5H7" fill="none" stroke="#fff" stroke-width="2.600"/><path d="M3 22C0 18 13 2 22 2" fill="none" stroke="#8be05a" stroke-width="1.500"/></svg></button>
    <button class="ml-[9px] w-[40px] flex items-center justify-center border-b-2 border-[#76b9ed]" aria-label="广联达 G"><svg class="size-6" viewBox="0 0 24 24"><path d="M23 1c-1 7-7 4-11 6-5 3-5 10 0 11 3 0 4-3 3-5l-2 1c0-4 8-5 9 0 0 6-7 11-14 8C-2 17-1 4 9 2c5-1 10 2 14-1z" fill="#1e9cf0"/></svg></button>
    <button class="ml-1 w-[47px] flex items-center justify-center bg-[#343c40] border-b-2 border-[#76b9ed]" aria-label="广联达BIM"><svg class="size-6"><use href="#app"/></svg></button>
    <button class="ml-1 w-[40px] flex items-center justify-center border-b-2 border-[#76b9ed]" aria-label="记事"><svg class="size-6" viewBox="0 0 24 24"><rect x="1" y="1" width="22" height="22" rx="2" fill="#f5961e" stroke="#ffd25a" stroke-width="2"/><path d="m4 7 10-3 4 14-11 3z" fill="#fff8e0"/><path d="m7 9 6-2M8 12l6-2M9 15l6-2" stroke="#999"/><path d="m13 15 8-13" stroke="#a03c10" stroke-width="2.500"/></svg></button>
  </div>
  <div class="ml-auto flex items-center">
    <span class="mr-[19px] text-[#ddd]">链接</span>
    <span class="mr-[19px] text-center">38%<br>CPU使用</span>
    <div class="flex items-center gap-[7px] mr-[19px]">
      <svg class="size-[14px] mr-[2px]" viewBox="0 0 14 14"><path d="m2 9.500 5-5 5 5" fill="none" stroke="#fff" stroke-width="1.300"/></svg>
      <svg class="w-[18px] h-4" viewBox="0 0 18 16"><path d="M6 5.500h10v7H6zM2 2v3M5 2v3M.5 5h6v2c-1 2-4 2-5.500 0M3.500 8v4.500H6M17 7.500v3" fill="none" stroke="#fff"/><path d="M7.500 7h7v4h-7z" fill="#fff"/></svg>
      <svg class="size-4" viewBox="0 0 16 16"><path d="M1 14C2 7 7 3 14 3M4 14c1-5 4-8 10-8M7 14c1-3 3-5 7-5M10 14c0-1.500 2-2.500 4-2.500" fill="none" stroke="#ddd"/><circle cx="13" cy="14" r="1.500" fill="#fff"/></svg>
      <svg class="w-[18px] h-4" viewBox="0 0 18 16"><path d="M1.500 5.500h3l3-3v11l-3-3h-3zM10 5.500c1.500 1.500 1.500 3.500 0 5M12.500 3.500c2.500 2.500 2.500 6.500 0 9M15 2c3.500 3.500 3.500 8.500 0 12" fill="none" stroke="#fff"/></svg>
      <svg class="w-[23px] h-[13px]" viewBox="0 0 23 13"><rect x=".5" y=".5" width="22" height="12" fill="none" stroke="#fff"/><path d="M3 3.500h17M3 6.500h17" stroke="#fff" stroke-dasharray="2 1"/><path d="M6 9.500h11" stroke="#fff"/></svg>
      <svg class="size-[14px]"><use href="#zh"/></svg>
      <svg class="ml-[6px] mr-1 size-4"><use href="#sogou"/></svg>
    </div>
    <span class="text-center leading-[19px]">16:03<br>2018/3/4</span>
    <div class="ml-[-5px] pl-[20px] w-[69px] h-full flex items-center"><svg class="ml-2 size-4" viewBox="0 0 16 16"><path d="M.5.500h15v12H11l-3 3-3-3H.5z" fill="none" stroke="#fff"/></svg><i class="ml-auto mr-1 w-px h-full bg-[#555]"></i></div>
  </div>
</footer>

<script>
const modules = [
  ['leaf','slab','现浇板(B)',1],['shut','','轴线'],['shut','','柱'],['shut','','墙'],['shut','','门窗洞'],['shut','','梁'],['shut','','板'],
  ['open','','基础'],['leaf','beam','基础梁(F)',1],['leaf','raft','筏板基础(M)',1],['leaf','pit','集水坑(K)',1],['leaf','pier','柱墩(Y)',1],['leaf','main','筏板主筋(R)',1],['leaf','neg','筏板负筋(X)',1],['leaf','indep','独立基础(P)',1],['leaf','strip','条形基础(T)',1],['leaf','cap','桩承台(V)',1],['leaf','beam','承台梁(F)',1],['leaf','pile','桩(U)',1],['leaf','band','基础板带(W)',1],
  ['open','','其它'],['leaf','post','后浇带(JD)',1],['leaf','eave','挑檐(T)',1],['leaf','rail','栏板(K)',1],['leaf','coping','压顶(YD)',1],
  ['open','','自定义'],['leaf','cpt','自定义点',0],['leaf','cline','自定义线(X)',0],['leaf','cface','自定义面',0],['leaf','dim','尺寸标注(W)',0]];
const badge = '<svg class="ml-[2px] w-[13px] h-[15px] shrink-0" viewBox="0 0 13 15"><path d="M.5.500h13v14H.5z" fill="#e4f1fd" stroke="#456"/><path d="M2.500 2.500h3v10h-3zM8.500 2.500h3v10h-3z" fill="#fff" stroke="#1c78e0"/><path d="M3 7h2M9 7h2" stroke="#1c78e0"/></svg>';
document.getElementById('modules').innerHTML = modules.map(([kind, icon, name, line]) => {
  if (kind !== 'leaf') return `<li class="h-4 flex items-center pl-[5px]">
    <svg class="size-[10px]"><use href="${kind === 'open' ? '#cd' : '#cr'}"/></svg><i class="ml-[4px] w-[3px] border-t border-dotted border-[#777]"></i>
    <svg class="w-4 h-[14px]"><use href="${kind === 'open' ? '#foldo' : '#fold'}"/></svg><span class="ml-[4px] whitespace-nowrap">${name}</span></li>`;
  const on = name.startsWith('筏板基础') ? 'h-4 pl-[2px] pr-1 flex items-center bg-[#d9d9d9]' : 'h-4 pl-[2px] flex items-center';
  return `<li class="h-4 flex items-center pl-[11px] whitespace-nowrap">
    <i class="${line ? 'w-[19px] h-4 border-l border-dotted border-[#777]' : 'w-[19px] h-4'}"></i>
    <i class="h-4 border-l border-dotted border-[#777]"></i><i class="w-[8px] border-t border-dotted border-[#777]"></i>
    <button class="${on}"><svg class="size-4 mr-[4px]"><use href="#${icon}"/></svg>${name}</button>${name === '自定义线(X)' ? badge : ''}</li>`;
}).join('');

const order = [1, 3, 2, ...Array.from({length: 31}, (_, i) => i + 4)];
document.getElementById('components').innerHTML = order.map((n, i) => `<li class="h-4 flex items-center pl-[30px]">
  <i class="h-4 border-l border-dotted border-[#777]"></i><i class="w-[8px] border-t border-dotted border-[#777]"></i>
  <button class="${i ? 'h-4 flex items-center pl-[4px]' : 'h-4 flex items-center pl-[4px] pr-[4px] bg-[#316ac5]'}"><svg class="size-3 mr-[7px]"><use href="#gear"/></svg>FB-${n}</button></li>`).join('');

const phi = '<svg class="inline-block align-[-1px] ml-[2px] mr-[2px] size-[10px]"><use href="#phi"/></svg>';
const props = [
  ['名称','FB-1',0,1],['混凝土强度等级','(C30)',1,1],['厚度(mm)','500',1],['顶标高(m)','层底标高+0.5',1],['底标高(m)','层底标高',1],['保护层厚度(mm)','30/20',1],['马凳筋参数图','Ⅰ型',0],['马凳筋信息',phi+'16@600*600',1],['线形马凳筋方向','平行横向受力筋',1],['拉筋',phi+'6@480*480',1,1],['拉筋数量计算方式','向上取整+1',1],['马凳筋数量计算方式','向上取整+1',1],['筏板侧面纵筋',phi+'14@200',1,1],['U形构造封边钢筋',phi+'14@200',1,1],['U形构造封边钢筋弯折长度(mm)','max(15*d,200)',0],['归类名称','(FB-1)',1],['汇总信息','筏板基础',1],['备注','',1],['显示样式','',0]];
document.getElementById('props').innerHTML = props.map(([name, val, add, blue], i) => {
  const sel = i === 14, last = i === 18;
  return `<tr class="h-[19px]">
  <td class="${sel ? 'border-r border-b border-[#c0c0c0] p-0 text-center bg-[#ffd58c] text-[#5a0050]' : 'border-r border-b border-[#c0c0c0] p-0 text-center bg-[#f7f7f7]'}">${i + 1}</td>
  <td class="${sel ? 'border-r border-b border-[#c0c0c0] p-0 whitespace-nowrap bg-[#0078d7] text-white' : blue ? 'border-r border-b border-[#c0c0c0] p-0 whitespace-nowrap text-[#0000ff]' : last ? 'border-r border-b border-[#c0c0c0] p-0 whitespace-nowrap text-[#808080]' : 'border-r border-b border-[#c0c0c0] p-0 whitespace-nowrap'}">
    <div class="${last ? 'flex items-center pl-[2px] gap-[5px]' : 'pl-[20px]'}">${last ? '<button class="size-[13px] border border-[#b0b0b0] text-black" aria-label="展开"><svg class="size-[11px]" viewBox="0 0 11 11"><path d="M2 5.500h7M5.500 2v7" stroke="#000"/></svg></button>' : ''}${name}</div></td>
  <td class="${sel ? 'border-r border-b border-[#c0c0c0] p-0 pl-[2px] whitespace-nowrap bg-[#d9eaf9]' : 'border-r border-b border-[#c0c0c0] p-0 pl-[2px] whitespace-nowrap'}">${val}</td>
  <td class="border-r border-b border-[#c0c0c0] p-0">${add ? `<input type="checkbox" aria-label="附加 第${i + 1}行" class="block mx-auto size-[13px] appearance-none border border-[#222] bg-white">` : ''}</td></tr>`;
}).join('');
</script>
</body>
</html>
